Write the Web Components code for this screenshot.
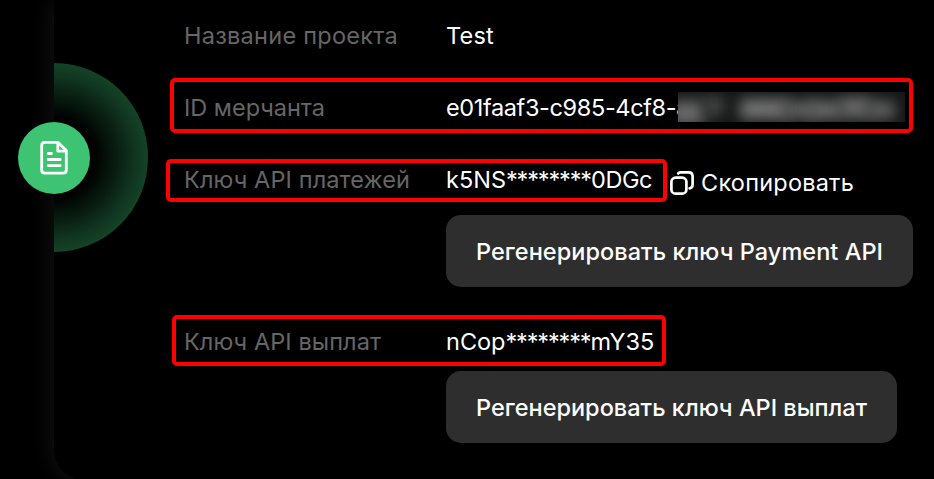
<!DOCTYPE html>
<html lang="ru">
<head>
<meta charset="utf-8">
<title>Project keys</title>
<style>
html,body{margin:0;background:#000;overflow:hidden}
body{width:934px;height:479px;font:400 23.5px/24px Inter,Roboto,sans-serif;color:#fff}
</style>
</head>
<body>
<project-page></project-page>
<script>
const define = (name, html, after) => customElements.define(name, class extends HTMLElement {
  connectedCallback() {
    if (this.shadowRoot) return;
    this.attachShadow({mode: 'open'}).innerHTML = html;
    if (after) after(this, this.shadowRoot);
  }
});

// A run of text tracked so that its advance equals the "w" attribute.
define('key-text', `<style>
:host{display:inline-block;white-space:pre;line-height:24px;flex:none;vertical-align:top}
span{display:inline-block}
</style><span><slot></slot></span>`, (el, root) => {
  const span = root.querySelector('span');
  const want = +el.getAttribute('w');
  const gap = (want - span.getBoundingClientRect().width) / el.textContent.length;
  span.style.letterSpacing = gap.toFixed(3) + 'px';
  el.style.width = want + 'px';
});

define('detail-row', `<style>
:host{display:grid;grid-template-columns:262px 1fr;height:24px}
.label{color:#666}
.value{display:flex;white-space:pre}
</style><div class="label"><slot name="label"></slot></div><div class="value"><slot></slot></div>`);

define('action-button', `<style>
:host{display:block;width:fit-content;margin-left:262px}
button{all:unset;box-sizing:border-box;display:flex;align-items:center;height:72px;padding:1px 30px 0;border-radius:15px;background:#2e2e2e;font-weight:500;color:#fff}
</style><button><slot></slot></button>`);

define('copy-action', `<style>
:host{display:flex;gap:7px;align-items:center;height:30px;margin-left:18px}
svg{display:block;flex:none}
</style><svg width="24" height="24" viewBox="0 0 24 24" fill="none" stroke="#fff" stroke-width="2.7" stroke-linecap="round"><rect x="1.4" y="6.6" width="15" height="16" rx="4.2"/><path d="M8.2 2.4Q9 1.4 10.5 1.4H18.5Q22.6 1.4 22.6 5.5V13.5Q22.6 16.8 19.6 17.3"/></svg><slot></slot>`);

define('mark-frame', `<style>
:host{position:absolute;box-sizing:border-box;border:4px solid #f00;border-radius:5px}
</style>`);

define('blur-patch', `<style>
:host{position:absolute;left:678px;top:92px;width:227px;height:30px;overflow:hidden;background:#151616}
i{position:absolute;filter:blur(7px);background:#6a6a6a}
</style>
<i style="left:-8px;top:9px;width:34px;height:24px"></i>
<i style="left:26px;top:4px;width:20px;height:20px;background:#444"></i>
<i style="left:62px;top:7px;width:48px;height:20px;background:#747474"></i>
<i style="left:105px;top:9px;width:34px;height:18px;background:#606060"></i>
<i style="left:132px;top:9px;width:32px;height:18px"></i>
<i style="left:162px;top:5px;width:30px;height:21px"></i>
<i style="left:188px;top:9px;width:29px;height:18px;background:#606060"></i>`);

define('section-badge', `<style>
:host{position:absolute;left:-40px;top:63px;width:188px;height:189px}
.glow{position:absolute;inset:0 0 0 94px;border-radius:0 94px 94px 0;background:radial-gradient(circle 94px at 0 50%,#000 0,#000 43%,#04100a 55%,#0a2113 70%,#103420 85%,#144326 100%)}
.dot{position:absolute;left:58px;top:59px;width:72px;height:72px;border-radius:50%;background:#3dc372}
svg{display:block}
</style><div class="glow"></div><div class="dot"><svg width="72" height="72" fill="none" stroke="#fff" stroke-width="2.8" stroke-linejoin="round" stroke-linecap="round"><path d="M26.7 20.4H40.1L48.3 28.6V48Q48.3 51.2 45.1 51.2H26.9Q23.7 51.2 23.7 48V23.5Q23.7 20.4 26.7 20.4Z"/><path d="M39.8 20.8V29.2H47.8M30.2 31.5H33.5M30.2 37.5H42.2M30.2 43.6H42.2"/></svg></div>`);

define('project-page', `<style>
:host{display:block;position:relative;width:934px;height:479px;overflow:hidden}
.panel{box-sizing:border-box;margin-left:54px;width:930px;height:480px;border-radius:0 0 0 30px;background:#000;box-shadow:0 0 24px rgba(255,255,255,.085);padding:24px 0 0 130px;display:flex;flex-direction:column}
.mt{margin-top:48px}
.up{margin-top:23px}
.pay{margin-top:43px}
.out{margin-top:17px}
</style>
<div class="panel">
<detail-row><key-text slot="label" w="214">Название проекта</key-text><key-text w="48">Test</key-text></detail-row>
<detail-row class="mt"><key-text slot="label" w="141">ID мерчанта</key-text><key-text w="243">e01faaf3-c985-4cf8-a</key-text></detail-row>
<detail-row class="mt"><key-text slot="label" w="226">Ключ API платежей</key-text><key-text w="60">k5NS</key-text><key-text w="85">********</key-text><key-text w="61">0DGc</key-text><copy-action><key-text w="153">Скопировать</key-text></copy-action></detail-row>
<action-button class="up"><key-text w="407">Регенерировать ключ Payment API</key-text></action-button>
<detail-row class="pay"><key-text slot="label" w="197">Ключ API выплат</key-text><key-text w="59.5">nCop</key-text><key-text w="85">********</key-text><key-text w="64">mY35</key-text></detail-row>
<action-button class="out"><key-text w="391">Регенерировать ключ API выплат</key-text></action-button>
</div>
<section-badge></section-badge>
<blur-patch></blur-patch>
<mark-frame style="left:170px;top:78px;width:743px;height:55px"></mark-frame>
<mark-frame style="left:166px;top:159px;width:501px;height:43px"></mark-frame>
<mark-frame style="left:172px;top:315px;width:494px;height:51px"></mark-frame>`);
</script>
</body>
</html>
